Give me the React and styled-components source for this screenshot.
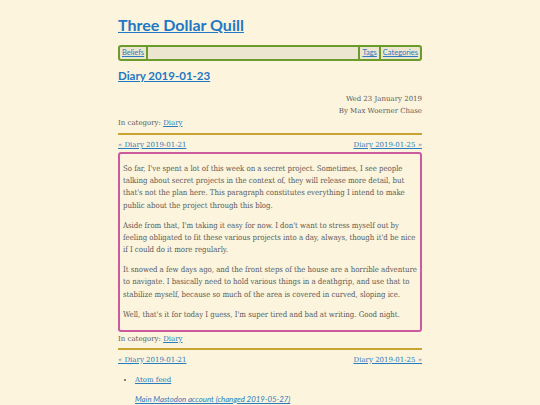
import React from 'react';
import styled, { createGlobalStyle } from 'styled-components';

const GlobalStyle = createGlobalStyle`
  html, body {
    margin: 0;
    padding: 0;
    background: #fcf4dc;
  }
  body {
    font-family: "DejaVu Serif", "Liberation Serif", serif;
    color: #5b5b5b;
  }
  a {
    color: #2b7bbf;
  }
`

const Page = styled.div`
  width: 304px;
  margin: 0 auto;
  padding-top: 15px;
`

const Title = styled.h1`
  margin: 0 0 10px;
  font-family: Lato, "Open Sans", sans-serif;
  font-weight: 700;
  font-size: 16px;
  line-height: 20px;
  a {
    color: #1f78c6;
  }
`

const Nav = styled.nav`
  display: flex;
  align-items: stretch;
  height: 12px;
  border: 2px solid #6b9b2b;
  border-radius: 3px;
  background: #ece6d0;
  font-family: Lato, "Open Sans", sans-serif;
  font-size: 7.5px;
  line-height: 12px;
`

const NavItem = styled.a`
  padding: 0 2px;
  border-left: ${p => (p.$left ? '2px solid #6b9b2b' : 'none')};
  border-right: ${p => (p.$right ? '2px solid #6b9b2b' : 'none')};
`

const Spacer = styled.div`
  flex: 1;
`

const PostTitle = styled.h2`
  margin: 7px 0 9px;
  font-family: Lato, "Open Sans", sans-serif;
  font-weight: 700;
  font-size: 11.5px;
  line-height: 16px;
  a {
    color: #1f78c6;
  }
`

const Meta = styled.div`
  font-size: 7px;
  line-height: 12px;
  text-align: ${p => p.$align || 'left'};
`

const Rule = styled.hr`
  margin: ${p => p.$margin || '4px 0'};
  border: none;
  border-top: 2px solid #c8a530;
  height: 0;
`

const PrevNext = styled.div`
  display: flex;
  justify-content: space-between;
  font-size: 7px;
  line-height: 12px;
  margin-bottom: ${p => p.$gap || '1px'};
`

const Box = styled.div`
  border: 2px solid #cc5a9e;
  border-radius: 3px;
  padding: 1px 0 1px 3px;
  margin-bottom: 1px;
`

const Para = styled.p`
  margin: 7.7px 0;
  font-size: 7.8px;
  font-stretch: condensed;
  letter-spacing: -0.04px;
  line-height: 12.3px;
  white-space: nowrap;
`

const Links = styled.ul`
  margin: 0;
  padding-left: 17px;
  font-size: 7px;
  line-height: 12px;
`

const LinkItem = styled.li`
  list-style: ${p => (p.$bare ? 'none' : 'disc')};
  margin-bottom: 7px;
`

const ItalicLink = styled.a`
  font-family: Lato, "Open Sans", sans-serif;
  font-size: 7.8px;
  font-style: italic;
`

const paragraphs = [
  [
    "So far, I've spent a lot of this week on a secret project. Sometimes, I see people",
    'talking about secret projects in the context of, they will release more detail, but',
    "that's not the plan here. This paragraph constitutes everything I intend to make",
    'public about the project through this blog.',
  ],
  [
    "Aside from that, I'm taking it easy for now. I don't want to stress myself out by",
    "feeling obligated to fit these various projects into a day, always, though it'd be nice",
    'if I could do it more regularly.',
  ],
  [
    'It snowed a few days ago, and the front steps of the house are a horrible adventure',
    'to navigate. I basically need to hold various things in a deathgrip, and use that to',
    'stabilize myself, because so much of the area is covered in curved, sloping ice.',
  ],
  [
    "Well, that's it for today I guess, I'm super tired and bad at writing. Good night.",
  ],
]

function Footer() {
  return (
    <>
      <Meta>In category: <a href="#">Diary</a></Meta>
      <Rule $margin="3px 0 4px" />
      <PrevNext $gap="8px">
        <a href="#">« Diary 2019-01-21</a>
        <a href="#">Diary 2019-01-25 »</a>
      </PrevNext>
    </>
  )
}

export default function App() {
  return (
    <Page>
      <GlobalStyle />
      <Title><a href="#">Three Dollar Quill</a></Title>
      <Nav>
        <NavItem href="#" $right>Beliefs</NavItem>
        <Spacer />
        <NavItem href="#" $left>Tags</NavItem>
        <NavItem href="#" $left>Categories</NavItem>
      </Nav>
      <PostTitle><a href="#">Diary 2019-01-23</a></PostTitle>
      <Meta $align="right">Wed 23 January 2019</Meta>
      <Meta $align="right">By Max Woerner Chase</Meta>
      <Meta>In category: <a href="#">Diary</a></Meta>
      <Rule />
      <PrevNext>
        <a href="#">« Diary 2019-01-21</a>
        <a href="#">Diary 2019-01-25 »</a>
      </PrevNext>
      <Box>
        {paragraphs.map((lines, i) => (
          <Para key={i}>
            {lines.map((line, j) => (
              <React.Fragment key={j}>
                {j > 0 && <br />}
                {line}
              </React.Fragment>
            ))}
          </Para>
        ))}
      </Box>
      <Footer />
      <Links>
        <LinkItem><a href="#">Atom feed</a></LinkItem>
        <LinkItem $bare><ItalicLink href="#">Main Mastodon account (changed 2019-05-27)</ItalicLink></LinkItem>
      </Links>
    </Page>
  )
}
